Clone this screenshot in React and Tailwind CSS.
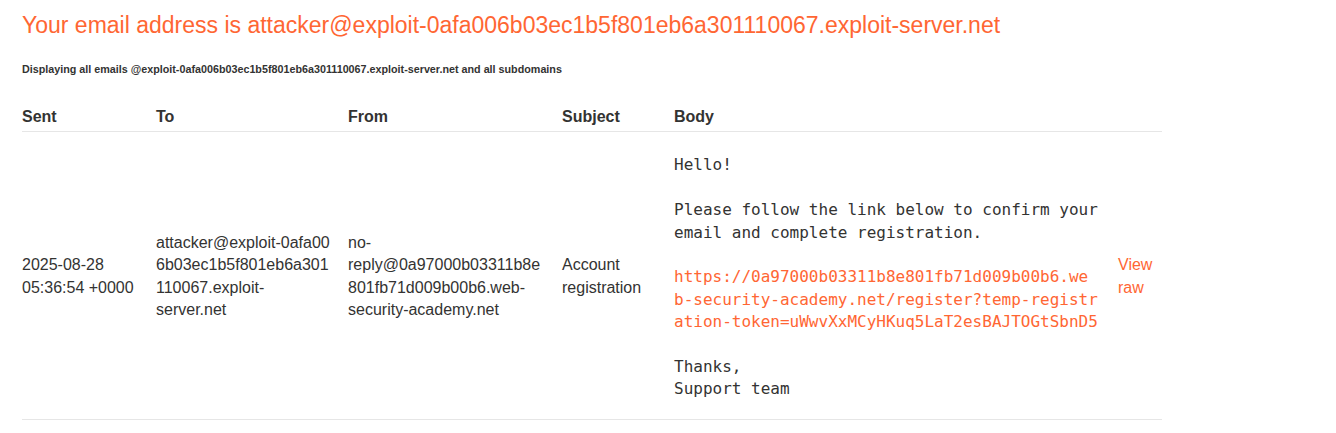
export default function App() {
  // \u2060 (word joiner) keeps the breaks where the reference has them
  const url =
    "https://0a97000b03311b8e801fb71d009b00b6.web\u2060-security-academy.net/register?temp-registration-token=uWwvXxMCyHKuq5LaT2esBAJTOGtSbnD5";

  return (
    <div className="min-h-screen bg-white px-[22px] text-[#333332] font-['Liberation_Sans',Arial,sans-serif]">
      {/* heading */}
      <h1 className="pt-[12px] text-[23px] leading-[27px] font-normal text-[#ff6633]">
        Your email address is attacker@exploit-0afa006b03ec1b5f801eb6a301110067.exploit-server.net
      </h1>

      <h4 className="mt-[24px] text-[10.75px] leading-[12px] font-bold">
        Displaying all emails @exploit-0afa006b03ec1b5f801eb6a301110067.exploit-server.net and all subdomains
      </h4>

      {/* emails */}
      <table className="mt-[31px] w-[1140px] table-fixed border-collapse text-[16px] leading-[22.4px]">
        <colgroup>
          <col className="w-[134px]" />
          <col className="w-[192px]" />
          <col className="w-[214px]" />
          <col className="w-[112px]" />
          <col className="w-[444px]" />
          <col className="w-[44px]" />
        </colgroup>
        <thead>
          <tr className="border-b border-[#e6e6e6]">
            <th className="pb-[3px] pr-[14px] text-left font-bold">Sent</th>
            <th className="pb-[3px] pr-[14px] text-left font-bold">To</th>
            <th className="pb-[3px] pr-[14px] text-left font-bold">From</th>
            <th className="pb-[3px] pr-[14px] text-left font-bold">Subject</th>
            <th className="pb-[3px] pr-[14px] text-left font-bold">Body</th>
            <th className="pb-[3px]"></th>
          </tr>
        </thead>
        <tbody>
          <tr className="border-b border-[#e6e6e6]">
            <td className="pt-[2px] pr-[14px] align-middle break-words">2025-08-28 05:36:54 +0000</td>
            <td className="pt-[2px] pr-[14px] align-middle break-words">
              {"attacker@exploit-\u20600afa006b03ec1b5f801eb6a301110067.exploit-server.net"}
            </td>
            <td className="pt-[2px] pr-[14px] align-middle break-words">
              no-reply@0a97000b03311b8e801fb71d009b00b6.web-security-academy.net
            </td>
            <td className="pt-[2px] pr-[14px] align-middle break-words">Account registration</td>
            <td className="pr-[14px] pt-[22px] pb-[18px] align-middle">
              <pre className="m-0 whitespace-pre-wrap font-['DejaVu_Sans_Mono',monospace] text-[16px] leading-[22.4px]">
                {"Hello!\n\nPlease follow the link below to confirm your email and complete registration.\n\n"}
                <a href="#" className="break-all text-[#ff6633]">
                  {url}
                </a>
                {"\n\nThanks,\nSupport team"}
              </pre>
            </td>
            <td className="pt-[2px] align-middle">
              <a href="#" className="text-[#ff6633]">
                View raw
              </a>
            </td>
          </tr>
        </tbody>
      </table>
    </div>
  );
}
